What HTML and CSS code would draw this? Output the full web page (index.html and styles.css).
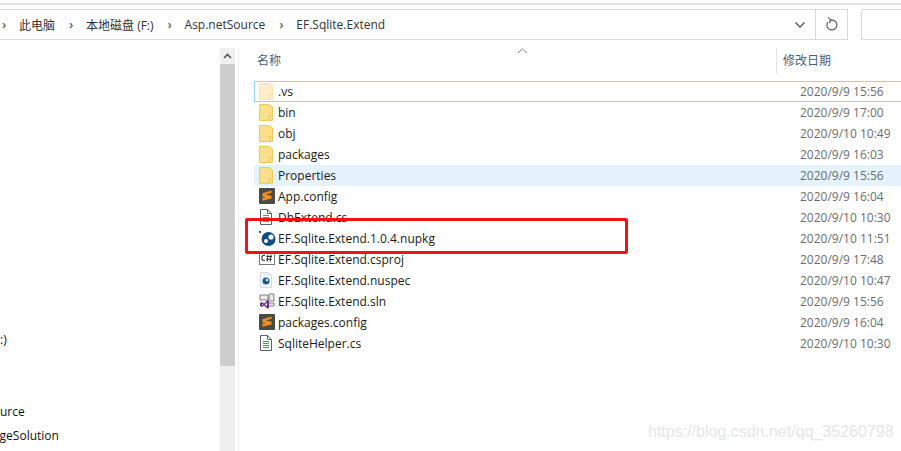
FILE: index.html
```html
<!DOCTYPE html>
<html lang="zh-CN">
<head>
  <meta charset="UTF-8" />
  <title>EF.Sqlite.Extend</title>
  <link rel="stylesheet" href="styles.css">
</head>
<body>

  <svg class="defs" width="0" height="0">
    <symbol id="folder" viewBox="0 0 14 17">
      <path d="M.5.5h9.5l3.5 2.5v13.5H.5z" fill="#fdde8b" stroke="#eec95f"/>
      <path d="M13.5 11.5h-3v5" fill="none" stroke="#eec95f"/>
    </symbol>
    <symbol id="sublime" viewBox="0 0 16 16">
      <rect width="16" height="16" rx="1" fill="#4a4a48"/>
      <path d="M12.5 2.5 3.5 5.2v3.3l9 2.5V7.8L6.8 6.4l5.7-1.6zM3.5 9.5v3.3l9-2.4-3-.9z" fill="#f38d1c"/>
    </symbol>
    <symbol id="doc" viewBox="0 0 14 16">
      <path d="M1.5.5h7l4 4v11h-11z" fill="#fff" stroke="#5c6268"/>
      <path d="M8.500.5v4h4" fill="none" stroke="#5c6268"/>
      <path d="M4 6.500h6M4 8.500h6M4 10.500h6M4 12.500h6" stroke="#5a9a5a"/>
    </symbol>
  </svg>

  <div class="top-rule"></div>

  <header class="toolbar">
    <nav class="address">
      <span class="crumb-arrow">›</span><span class="crumb">此电脑</span>
      <span class="crumb-arrow">›</span><span class="crumb">本地磁盘 (F:)</span>
      <span class="crumb-arrow">›</span><span class="crumb">Asp.netSource</span>
      <span class="crumb-arrow">›</span><span class="crumb">EF.Sqlite.Extend</span>
      <span class="address-drop">
        <svg width="12" height="8" viewBox="0 0 12 8"><path d="M1.500 1.500 6 6l4.500-4.500" fill="none" stroke="#6a6a6a" stroke-width="1.700"/></svg>
      </span>
      <span class="address-refresh">
        <svg width="14" height="15" viewBox="0 0 14 15"><path d="M4.500 3.500a5 5 0 1 1-1.800 1.600" fill="none" stroke="#777" stroke-width="1.500"/><path d="M3 .5 6.500 3 4 6" fill="none" stroke="#777" stroke-width="1.300"/></svg>
      </span>
    </nav>
    <div class="search"></div>
  </header>

  <main class="panes">
    <aside class="tree">
      <div class="tree-row tree-c"><span>(C:)</span></div>
      <div class="tree-row tree-source"><span>Asp.netSource</span></div>
      <div class="tree-row tree-pkg"><span>PackageSolution</span></div>
    </aside>

    <div class="scrollbar">
      <div class="scroll-up">
        <svg width="9" height="6" viewBox="0 0 9 6"><path d="M1 5l3.500-3.500L8 5" fill="none" stroke="#555" stroke-width="1.600"/></svg>
      </div>
      <div class="scroll-thumb"></div>
    </div>

    <section class="files">
      <div class="file-head">
        <div class="col-name">
          名称
          <svg class="sort-caret" width="11" height="6" viewBox="0 0 11 6"><path d="M1 5l4.500-4L10 5" fill="none" stroke="#8a8a8a"/></svg>
        </div>
        <div class="col-date">修改日期</div>
      </div>

      <div class="file-list">
        <div class="file-row focused">
          <svg class="ico ghost" width="14" height="17"><use href="#folder"/></svg>
          <span class="name">.vs</span><span class="date">2020/9/9 15:56</span>
        </div>
        <div class="file-row">
          <svg class="ico" width="14" height="17"><use href="#folder"/></svg>
          <span class="name">bin</span><span class="date">2020/9/9 17:00</span>
        </div>
        <div class="file-row">
          <svg class="ico" width="14" height="17"><use href="#folder"/></svg>
          <span class="name">obj</span><span class="date">2020/9/10 10:49</span>
        </div>
        <div class="file-row">
          <svg class="ico" width="14" height="17"><use href="#folder"/></svg>
          <span class="name">packages</span><span class="date">2020/9/9 16:03</span>
        </div>
        <div class="file-row hover">
          <svg class="ico" width="14" height="17"><use href="#folder"/></svg>
          <span class="name">Properties</span><span class="date">2020/9/9 15:56</span>
        </div>
        <div class="file-row">
          <svg class="ico" width="16" height="16"><use href="#sublime"/></svg>
          <span class="name">App.config</span><span class="date">2020/9/9 16:04</span>
        </div>
        <div class="file-row">
          <svg class="ico" width="14" height="16"><use href="#doc"/></svg>
          <span class="name">DbExtend.cs</span><span class="date">2020/9/10 10:30</span>
        </div>
        <div class="file-row">
          <svg class="ico" width="17" height="16" viewBox="0 0 17 16">
            <rect x="0" y="1" width="2" height="2" fill="#1d5f99"/>
            <circle cx="9.500" cy="9" r="7" fill="#0f4c81"/>
            <circle cx="7" cy="11" r="2" fill="#fff"/>
            <circle cx="12" cy="7" r="2.600" fill="#fff"/>
          </svg>
          <span class="name">EF.Sqlite.Extend.1.0.4.nupkg</span><span class="date">2020/9/10 11:51</span>
        </div>
        <div class="file-row">
          <svg class="ico" width="16" height="14" viewBox="0 0 16 14">
            <rect x=".5" y=".5" width="15" height="13" fill="#fff" stroke="#777"/>
            <path d="M6 4.500H4L3 5.500v3l1 1h2" fill="none" stroke="#333" stroke-width="1.100"/>
            <path d="M9 3.500l-.8 7M12 3.500l-.8 7M7.500 5.500h5.500M7.200 8.300h5.500" stroke="#333"/>
          </svg>
          <span class="name">EF.Sqlite.Extend.csproj</span><span class="date">2020/9/9 17:48</span>
        </div>
        <div class="file-row">
          <svg class="ico" width="14" height="16" viewBox="0 0 14 16">
            <path d="M1.500.5h8l3 3v12h-11z" fill="#f2f5f8" stroke="#d5dbe2"/>
            <circle cx="7" cy="9" r="3.500" fill="#1a5d96"/>
            <circle cx="8" cy="8" r="1.200" fill="#fff"/>
          </svg>
          <span class="name">EF.Sqlite.Extend.nuspec</span><span class="date">2020/9/10 10:47</span>
        </div>
        <div class="file-row">
          <svg class="ico" width="16" height="16" viewBox="0 0 16 16">
            <path d="M1 2h8v5H1zM10 1h5v7h-5zM9 10h6v3H9z" fill="#e9e9e9" stroke="#666" stroke-width=".8"/>
            <path d="M1 10l2-1 2 1.500L8.500 7 10 8v7l-1.500.8L5 12.500 3 14l-2-1z" fill="#6a2c91"/>
            <path d="M3 10.500v2l1.200-1zM8 9.500l-2 2 2 2z" fill="#fff"/>
          </svg>
          <span class="name">EF.Sqlite.Extend.sln</span><span class="date">2020/9/9 15:56</span>
        </div>
        <div class="file-row">
          <svg class="ico" width="16" height="16"><use href="#sublime"/></svg>
          <span class="name">packages.config</span><span class="date">2020/9/9 16:04</span>
        </div>
        <div class="file-row">
          <svg class="ico" width="14" height="16"><use href="#doc"/></svg>
          <span class="name">SqliteHelper.cs</span><span class="date">2020/9/10 10:30</span>
        </div>
      </div>
    </section>
  </main>

  <!-- annotation and watermark sit on top of the window -->
  <div class="red-box"></div>
  <div class="watermark">https://blog.csdn.net/qq_35260798</div>

</body>
</html>
```

FILE: styles.css
```css
html, body {
  margin: 0;
  padding: 0;
}
body {
  width: 901px;
  height: 451px;
  overflow: hidden;
  position: relative;
  background: #fff;
  color: #1a1a1a;
  font-family: "Open Sans", "Noto Sans CJK SC", sans-serif;
  font-size: 12px;
}
.defs {
  position: absolute;
}
.top-rule {
  height: 2px;
  margin-top: 3px;
  background: #e3e3e3;
}

/* address bar */
.toolbar {
  display: flex;
  gap: 13px;
  height: 31px;
  margin-top: 4px;
}
.address {
  flex: 1;
  display: flex;
  align-items: center;
  border: solid #d9d9d9;
  border-width: 1px 1px 1px 0;
  color: #333;
  font-size: 12px;
}
.crumb {
  margin-right: 12px;
}
.crumb-arrow {
  width: 5px;
  margin: 0 12px 0 2px;
  color: #777;
  font-weight: bold;
}
.address-drop {
  margin-left: auto;
  width: 30px;
  display: flex;
  justify-content: center;
}
.address-refresh {
  width: 31px;
  height: 100%;
  border-left: 1px solid #d9d9d9;
  display: flex;
  align-items: center;
  justify-content: center;
}
.search {
  width: 39px;
  border: solid #d9d9d9;
  border-width: 1px 0 1px 1px;
}

/* panes */
.panes {
  display: flex;
  margin-top: 8px;
  height: 404px;
}
.tree {
  width: 220px;
  overflow: hidden;
  color: #111;
}
.tree-row {
  height: 24px;
  line-height: 24px;
  white-space: nowrap;
}
.tree-c {
  margin-top: 280px;
}
.tree-c span {
  margin-left: -11px;
}
.tree-source {
  margin-top: 48px;
}
.tree-source span {
  margin-left: -56px;
}
.tree-pkg span {
  margin-left: -33px;
}
.scrollbar {
  width: 15px;
  background: #f0f0f0;
  border-right: 3px solid #fff;
  box-sizing: content-box;
}
.scroll-up {
  height: 16px;
  display: flex;
  align-items: center;
  justify-content: center;
}
.scroll-thumb {
  height: 302px;
  background: #cdcdcd;
}
.files {
  flex: 1;
  border-left: 1px solid #f0f0f0;
  min-width: 0;
}
.file-head {
  display: flex;
  height: 26px;
  color: #4c607a;
}
.col-name {
  width: 537px;
  padding-left: 18px;
  box-sizing: border-box;
  line-height: 26px;
  position: relative;
}
.sort-caret {
  position: absolute;
  left: 278px;
  top: 0;
}
.col-date {
  flex: 1;
  padding-left: 6px;
  line-height: 26px;
  border-left: 1px solid #e5e5e5;
}
.file-list {
  margin-top: 7px;
  margin-left: 15px;
}
.file-row {
  display: flex;
  align-items: center;
  height: 21px;
  box-sizing: border-box;
  position: relative;
  border: 1px solid transparent;
  border-right: 0;
}
.file-row.focused {
  border-color: #99d1ff;
}
.file-row.hover {
  background: #e5f3ff;
}
.ico {
  position: absolute;
  left: 4px;
  top: 1px;
}
.ghost {
  opacity: .5;
}
.name {
  margin-left: 23px;
  width: 522px;
  flex: none;
}
.date {
  color: #6d6d6d;
  white-space: nowrap;
}

/* red annotation */
.red-box {
  position: absolute;
  left: 245px;
  top: 218px;
  width: 377px;
  height: 30px;
  border: 3px solid #f01414;
  border-radius: 2px;
}
.watermark {
  position: absolute;
  left: 648px;
  top: 423px;
  font-family: "Liberation Sans", sans-serif;
  font-size: 16px;
  color: #e6e6e6;
  white-space: nowrap;
}
```
